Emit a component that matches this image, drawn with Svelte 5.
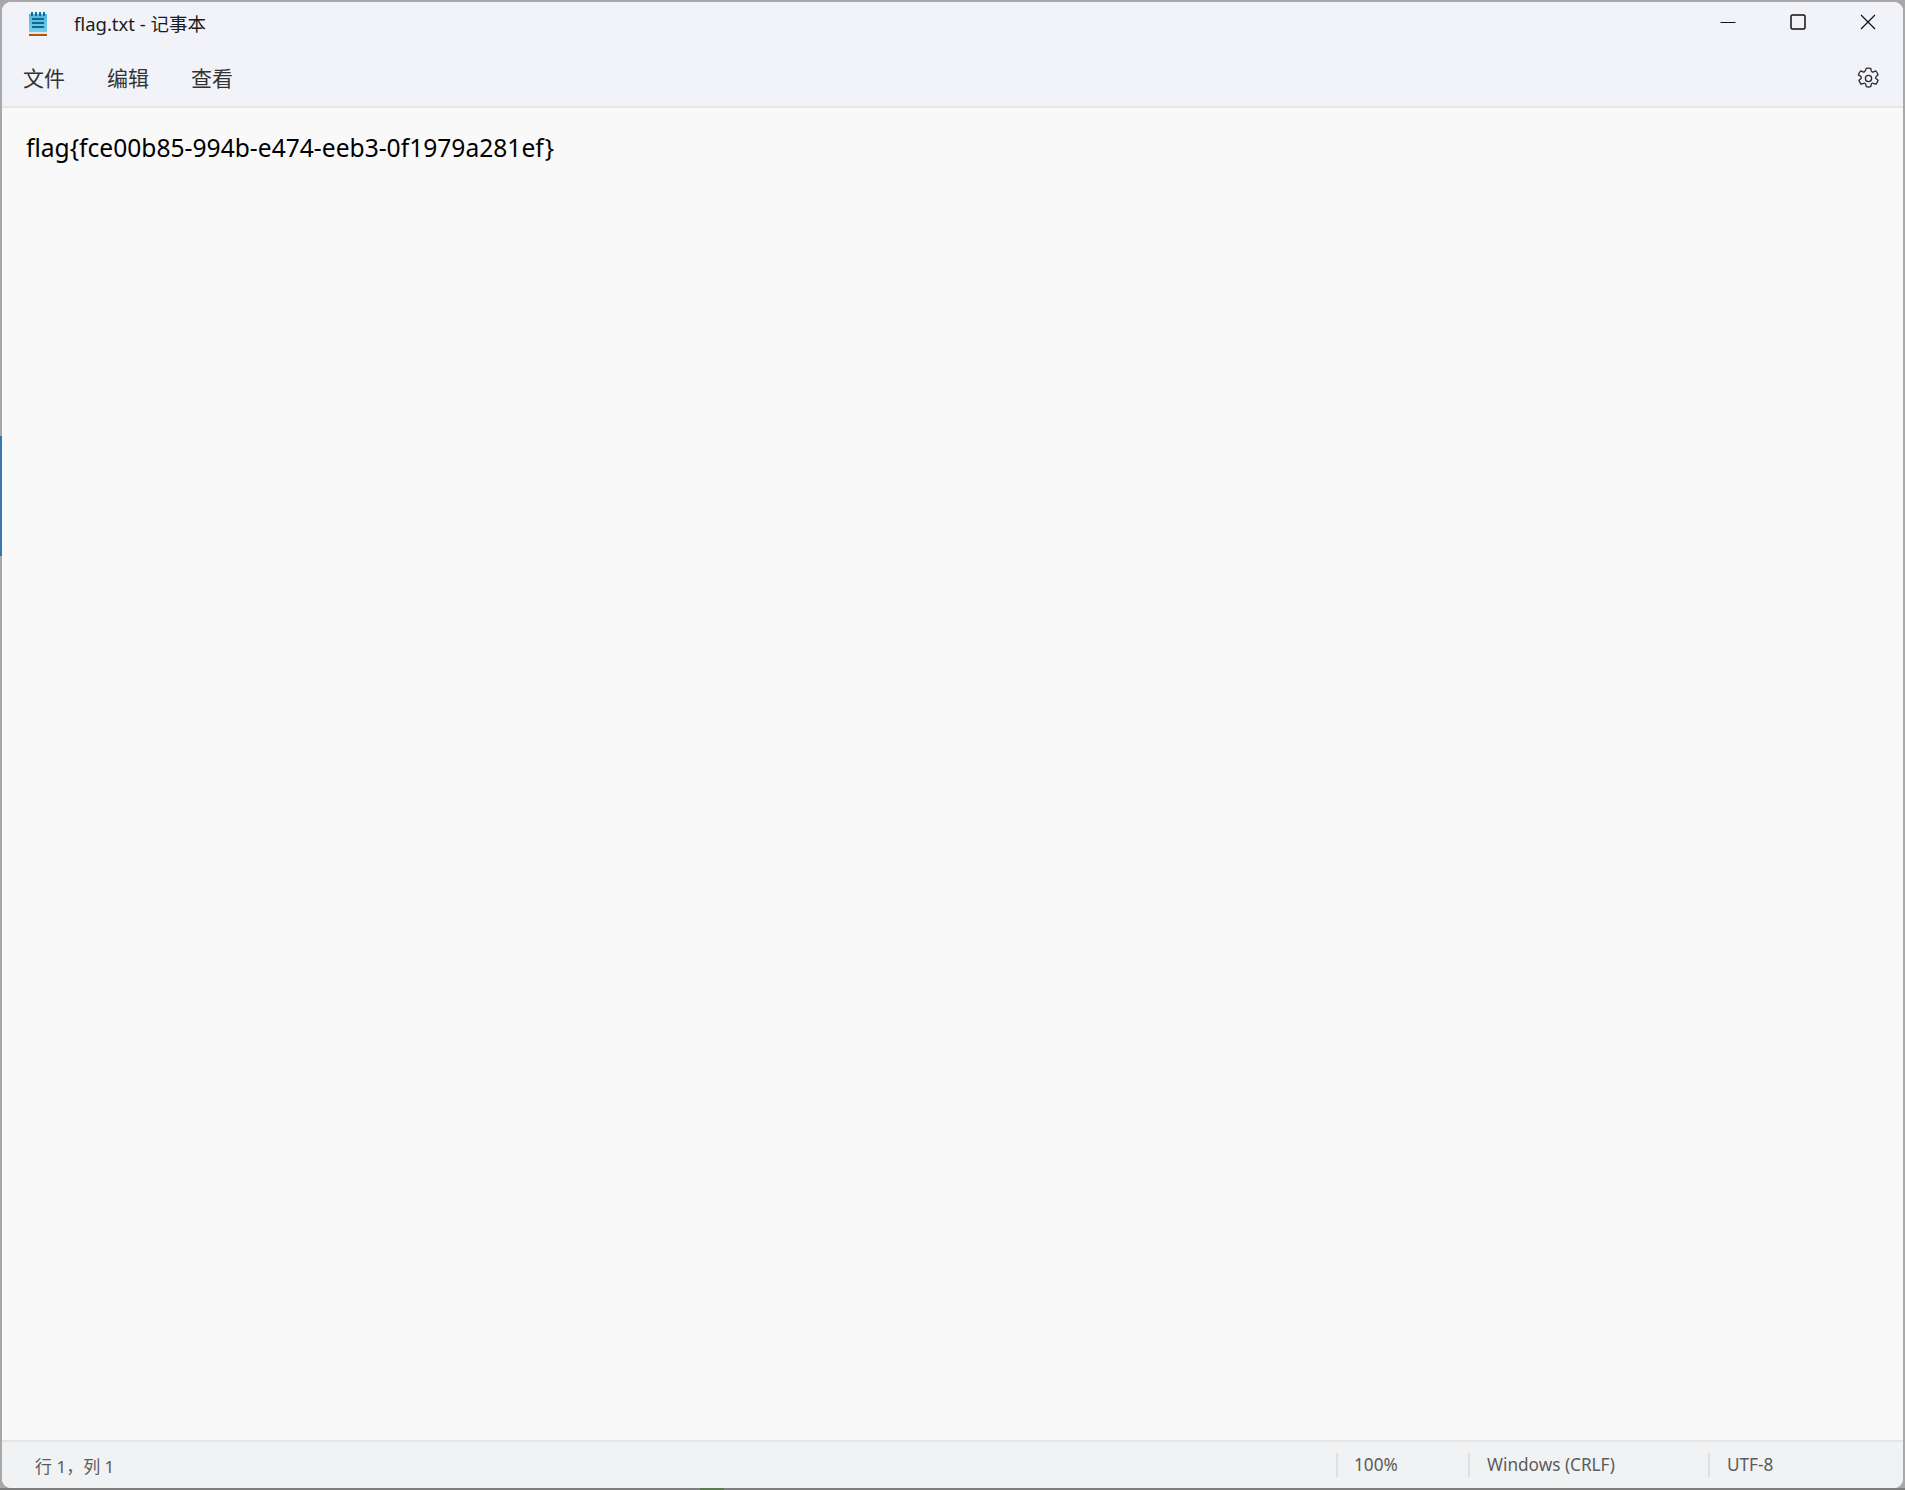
<script>
	const menus = ['文件', '编辑', '查看'];
	const content = 'flag{fce00b85-994b-e474-eeb3-0f1979a281ef}';
</script>

<div class="desktop">
	<div class="window">
		<header class="titlebar">
			<svg class="appicon" width="20" height="26" viewBox="0 0 20 26">
				<defs>
					<linearGradient id="shade" x1="0" y1="0" x2="0" y2="1">
						<stop offset="0" stop-color="#4db6e0" />
						<stop offset="1" stop-color="#7fd0ee" />
					</linearGradient>
				</defs>
				<rect x="1" y="3" width="18" height="20" fill="url(#shade)" />
				<rect x="3" y="1" width="2" height="4" fill="#0f6f9c" />
				<rect x="7" y="1" width="2" height="4" fill="#0f6f9c" />
				<rect x="11" y="1" width="2" height="4" fill="#0f6f9c" />
				<rect x="15" y="1" width="2" height="4" fill="#0f6f9c" />
				<rect x="4" y="7" width="12" height="2" fill="#12698f" />
				<rect x="4" y="11" width="12" height="2" fill="#12698f" />
				<rect x="4" y="15" width="12" height="2" fill="#12698f" />
				<rect x="1" y="21" width="18" height="2" fill="#e6e6e6" />
				<rect x="1" y="23" width="18" height="2" fill="#b0560f" />
			</svg>
			<span class="title">flag.txt - 记事本</span>
			<div class="controls">
				<button aria-label="最小化">
					<svg width="16" height="16" viewBox="0 0 16 16"><path d="M0.5 8.5h15" stroke="#111" fill="none" /></svg>
				</button>
				<button aria-label="最大化">
					<svg width="16" height="16" viewBox="0 0 16 16"><rect x="1" y="1" width="14" height="14" rx="1.5" stroke="#111" stroke-width="1.5" fill="none" /></svg>
				</button>
				<button aria-label="关闭">
					<svg width="16" height="16" viewBox="0 0 16 16"><path d="M1 1l14 14M15 1L1 15" stroke="#111" stroke-width="1.2" fill="none" /></svg>
				</button>
			</div>
		</header>

		<nav class="menubar">
			{#each menus as item}
				<span class="menu">{item}</span>
			{/each}
			<svg class="gear" width="25" height="25" viewBox="0 0 24 24" fill="none" stroke="#2b2b2b" stroke-width="1.25" stroke-linejoin="round">
				<path d="M9.8 2.3a10 10 0 0 1 4.4 0l.5 2.4a1.4 1.4 0 0 0 2 .9l2.3-.9a10 10 0 0 1 2.2 3.8l-1.8 1.5a1.4 1.4 0 0 0 0 2.2l1.8 1.5a10 10 0 0 1-2.2 3.8l-2.3-.9a1.4 1.4 0 0 0-2 .9l-.5 2.4a10 10 0 0 1-4.4 0l-.5-2.4a1.4 1.4 0 0 0-2-.9l-2.3.9a10 10 0 0 1-2.2-3.8l1.8-1.5a1.4 1.4 0 0 0 0-2.2L2.3 8.5a10 10 0 0 1 2.2-3.8l2.3.9a1.4 1.4 0 0 0 2-.9z" />
				<circle cx="12" cy="12" r="3" />
			</svg>
		</nav>

		<main class="editor">{content}</main>

		<footer class="statusbar">
			<span class="pos">行 1，列 1</span>
			<span class="cell zoom">100%</span>
			<span class="cell eol">Windows (CRLF)</span>
			<span class="cell enc">UTF-8</span>
		</footer>
	</div>
</div>

<style>
	:global(body) {
		margin: 0;
		background: #a8a8a8;
	}

	.desktop {
		width: 1905px;
		height: 1490px;
		box-sizing: border-box;
		padding: 2px;
		/* bits of the desktop showing round the window edge */
		background:
			linear-gradient(#3a76b0, #3a76b0) 0 436px / 2px 120px no-repeat,
			linear-gradient(#5a7a50, #5a7a50) 700px 100% / 24px 2px no-repeat,
			linear-gradient(#7f7f7f, #7f7f7f) 0 100% / 100% 2px no-repeat,
			#a8a8a8;
		font-family: 'Noto Sans', 'Microsoft YaHei', 'Noto Sans CJK SC', sans-serif;
	}

	.window {
		height: 100%;
		display: flex;
		flex-direction: column;
		background: #f9f9f9;
		border-radius: 9px;
		overflow: hidden;
	}

	.titlebar {
		height: 46px;
		flex: none;
		display: flex;
		align-items: center;
		background: #f2f3f9;
		padding-left: 26px;
	}

	.appicon {
		margin-top: -3px;
	}

	.title {
		margin-left: 26px;
		font-size: 18.5px;
		color: #1c1c1c;
		margin-top: -4px;
	}

	.controls {
		margin-left: auto;
		display: flex;
		margin-bottom: 6px;
	}

	.controls button {
		width: 70px;
		height: 42px;
		padding: 0;
		border: 0;
		background: none;
		display: flex;
		align-items: center;
		justify-content: center;
	}

	.menubar {
		height: 58px;
		flex: none;
		display: flex;
		align-items: center;
		gap: 42px;
		padding: 0 22px 0 21px;
		background: #f2f3f9;
		border-bottom: 2px solid #e5e6ea;
	}

	.menu {
		font-size: 21px;
		color: #333;
	}

	.gear {
		margin-left: auto;
		margin-top: 2px;
	}

	.editor {
		flex: 1;
		padding: 23px 24px;
		font-size: 24.6px;
		line-height: 34px;
		color: #000;
		background: #f9f9f9;
	}

	.statusbar {
		height: 46px;
		flex: none;
		display: flex;
		align-items: center;
		background: #f1f2f4;
		border-top: 2px solid #e5e5e5;
		font-size: 17.2px;
		color: #5c5c5c;
	}

	.pos {
		margin-left: 33px;
		margin-right: auto;
		font-size: 17px;
	}

	.cell {
		height: 24px;
		line-height: 24px;
		box-sizing: border-box;
		border-left: 2px solid #dfdfdf;
		padding-left: 16px;
	}

	.eol,
	.enc {
		padding-left: 17px;
	}

	.zoom {
		width: 132px;
	}

	.eol {
		width: 240px;
	}

	.enc {
		width: 195px;
	}
</style>
